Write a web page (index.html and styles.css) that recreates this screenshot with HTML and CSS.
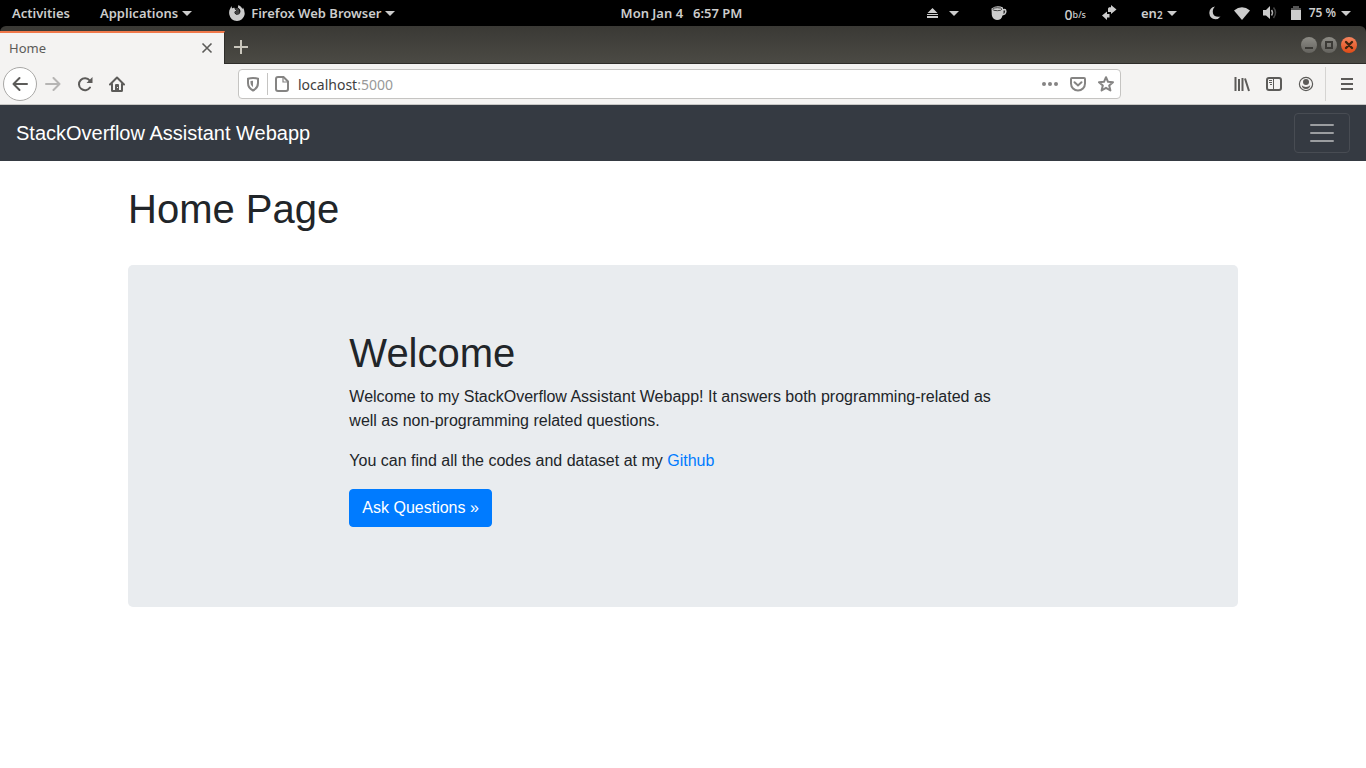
FILE: index.html
```
<!DOCTYPE html>
<html lang="en">
<head>
<meta charset="utf-8">
<meta name="viewport" content="width=device-width, initial-scale=1">
<title>Home</title>
<link rel="stylesheet" href="styles.css">
</head>
<body>
<header class="topbar">
  <div class="topbar-left">
    <button class="top-item">Activities</button>
    <button class="top-item">Applications <span class="caret"></span></button>
    <button class="top-item">
      <svg class="firefox" width="16" height="16" viewBox="0 0 16 16"><path fill="#ccc" d="M2.500 1 3 3.500Q4 2.500 5.500 2.800L6 4.500 7.500 5.500 5.600 6.800Q5 9 7.500 9.800Q10.500 10 11.200 7.500Q11.800 5.500 10.500 4L8.800 2.500 9.500 0Q12.500 1.500 13.500 4L14 2.500Q16.300 6.500 15.500 10Q14 15.500 8 16Q1.500 15.500.300 9.500Q-.3 6 1 4Z"/><path d="M5.500 3.500 8.500 3Q11 5 10.700 7.500L9.500 9 7 9 5.700 7.500 7.500 5.500Z" fill="#444"/></svg>
      Firefox Web Browser <span class="caret"></span>
    </button>
  </div>
  <time class="clock"><span>Mon Jan 4</span><span>6:57 PM</span></time>
  <div class="topbar-right">
    <button class="top-item status" aria-label="Removable drives">
      <svg width="11" height="10" viewBox="0 0 11 10"><path fill="#ccc" d="M5.500 0 10.500 5H.5ZM0 6h11v1H0zM0 8h11v2H0z"/></svg>
      <span class="caret drive-caret"></span>
    </button>
    <button class="top-item status" aria-label="Caffeine">
      <svg width="16" height="14" viewBox="0 0 16 14"><path fill="#ccc" d="M.5 2.500Q6-1.500 12 1.500V3Q16 2 15.500 6Q15 9 11.500 9.500Q10.500 14 6 14Q1.500 13.500.800 9Z"/><path d="M12.500 4.500v3.500Q14.200 7 14.200 4.500Z" fill="#222"/><ellipse cx="6.300" cy="3.200" rx="4.600" ry="1.500" fill="none" stroke="#444"/></svg>
    </button>
    <span class="network"><span class="rate">0</span><small>b/s</small></span>
    <svg class="transfer" width="15" height="16" viewBox="0 0 15 16"><path fill="#ccc" d="M7 2.300h2V0l5.500 4.600L9 9V7H6V3.500ZM7.500 9H5V6.500L0 10.500 5 15v-2.500h2.500Z"/></svg>
    <button class="top-item status">en<span class="subdigit">2</span> <span class="caret"></span></button>
    <button class="top-item status system" aria-label="System menu">
      <svg width="12" height="14" viewBox="0 0 12 14"><path fill="#ccc" d="M6 .5Q.5 1.500.300 7Q.8 13 6.500 13.300Q9.500 13.200 11.500 10.500Q5.500 11.500 4 7.500Q3 3.500 6 .5Z"/></svg>
      <svg width="16" height="13" viewBox="0 0 16 13"><path fill="#ccc" d="M0 3.500Q8-3 16 3.500L8 13Z"/></svg>
      <svg width="15" height="14" viewBox="0 0 15 14"><path fill="#ccc" d="M0 4h3l4-4v13L3 9.500H0z"/><path d="M8.500 4q2 2.800 0 5.500" fill="none" stroke="#aaa" stroke-width="1.500"/><path d="M10.500 1.500q4 5 0 10.500" fill="none" stroke="#444" stroke-width="1.500"/></svg>
      <svg width="10" height="14" viewBox="0 0 10 14"><path fill="#555" d="M2 0h6v2h2v2H0V2h2z"/><path fill="#ccc" d="M0 4h10v10H0z"/></svg>
      <span class="percent">75 %</span>
      <span class="caret"></span>
    </button>
  </div>
</header>

<section class="browser">
  <div class="tabstrip">
    <div class="tab">
      <span>Home</span>
      <button class="icon-button" aria-label="Close tab"><svg width="12" height="12" viewBox="0 0 12 12"><path d="M1.500 1.500l9 9m0-9l-9 9" stroke="#5c5b59" stroke-width="1.600"/></svg></button>
    </div>
    <button class="icon-button new-tab" aria-label="New tab"><svg width="14" height="14" viewBox="0 0 14 14"><path d="M7 0v14M0 7h14" stroke="#c9c6bc" stroke-width="2"/></svg></button>
    <div class="window-controls">
      <button class="window-button" aria-label="Minimize"><svg width="16" height="16" viewBox="0 0 16 16"><path d="M4 11h8" stroke="#3b3a36" stroke-width="2"/></svg></button>
      <button class="window-button" aria-label="Maximize"><svg width="16" height="16" viewBox="0 0 16 16"><path d="M5 5h6v6H5z" fill="none" stroke="#3b3a36" stroke-width="2"/></svg></button>
      <button class="window-button window-close" aria-label="Close"><svg width="16" height="16" viewBox="0 0 16 16"><path d="M5 5l6 6m0-6l-6 6" stroke="#40250f" stroke-width="2.400" stroke-linecap="round"/></svg></button>
    </div>
  </div>

  <div class="toolbar">
    <button class="icon-button back" aria-label="Back"><svg width="16" height="16" viewBox="0 0 16 16"><path d="M15 8H1.500M7.500 2 1.500 8l6 6" class="line" stroke-linecap="round" stroke-linejoin="round"/></svg></button>
    <button class="icon-button tool" aria-label="Forward"><svg class="faded" width="16" height="16" viewBox="0 0 16 16"><path d="M1 8h13.500M8.500 2l6 6-6 6" class="line" stroke-linecap="round" stroke-linejoin="round"/></svg></button>
    <button class="icon-button tool" aria-label="Reload"><svg width="16" height="16" viewBox="0 0 16 16"><path d="M12.700 4.500A6 6 0 1 0 13 11.500" class="line" stroke-linecap="round"/><path d="M15.500 1V7H9.500Z" class="solid"/></svg></button>
    <button class="icon-button tool" aria-label="Home"><svg width="16" height="16" viewBox="0 0 16 16"><path d="M1 8.500 8 1.500l7 7M3 8v6.500q0 .5.500.5h9q.5 0 .5-.5V8" class="line" stroke-linecap="round" stroke-linejoin="round"/><path d="M6 15V9q0-1 1-1h2q1 0 1 1v6Z" class="solid"/><path d="M8 11h1v1H8z" fill="#eee"/></svg></button>
    <div class="spacer"></div>
    <div class="urlbar">
      <button class="icon-button url-icon" aria-label="Tracking protection"><svg class="light" width="16" height="16" viewBox="0 0 16 16"><path d="M8 2q2.500 0 5 .8V7q0 5-5 7.500Q3 12 3 7V2.800Q5.500 2 8 2Z" class="line"/><path d="M8 4.800v6.500Q5.500 9.500 5.500 7V5q1-.2 2.500-.2" class="solid"/></svg></button>
      <button class="icon-button url-icon page-info" aria-label="Site information"><svg class="light" width="16" height="16" viewBox="0 0 16 16"><path d="M4 1h5.500L14 5.500V13q0 2-2 2H4q-2 0-2-2V3q0-2 2-2Z" class="line"/><path d="M9 1v5h5" fill="none" stroke="#858483" stroke-width="1.200"/></svg></button>
      <a class="address" href="#">localhost<span>:5000</span></a>
      <div class="url-actions">
        <button class="icon-button url-action" aria-label="Page actions"><svg class="light" width="16" height="16" viewBox="0 0 16 16"><circle cx="2" cy="8" r="2" class="solid"/><circle cx="8" cy="8" r="2" class="solid"/><circle cx="14" cy="8" r="2" class="solid"/></svg></button>
        <button class="icon-button url-action" aria-label="Save to Pocket"><svg class="light" width="16" height="16" viewBox="0 0 16 16"><path d="M2 2h12q1 0 1 1v4.500a7 7 0 0 1-14 0V3q0-1 1-1Z" class="line"/><path d="M4.500 6.200 8 9.500l3.500-3.300" class="line" stroke-linecap="round"/></svg></button>
        <button class="icon-button url-action" aria-label="Bookmark"><svg class="light" width="16" height="16" viewBox="0 0 16 16"><path d="m8 1.200 2 4.600 5 .4-3.800 3.300 1.200 5L8 11.800l-4.400 2.700 1.200-5L1 6.200l5-.4Z" class="line" stroke-linejoin="round"/></svg></button>
      </div>
    </div>
    <div class="spacer"></div>
    <button class="icon-button tool" aria-label="Library"><svg width="16" height="16" viewBox="0 0 16 16"><path d="M1.500 1v14M5 3v12M8.500 2v13M11 2.500l4 12.500" class="line"/></svg></button>
    <button class="icon-button tool" aria-label="Sidebars"><svg width="16" height="16" viewBox="0 0 16 16"><rect x="1" y="2" width="14" height="12" rx="2" class="line"/><path d="M7.500 2v12M3 4.500h3M3 6.500h3M4 8.500h2" stroke="#5c5b59"/></svg></button>
    <button class="icon-button tool" aria-label="Account"><svg width="16" height="16" viewBox="0 0 16 16"><circle cx="8" cy="8" r="6.600" fill="none" stroke="#5c5b59" stroke-width="1.200"/><circle cx="8" cy="6" r="3" class="solid"/><path d="M3.800 9.300q1.500 1.700 4.200 1.700t4.200-1.700Q12 13 8 13T3.800 9.300Z" class="solid"/></svg></button>
    <button class="icon-button tool menu" aria-label="Menu"><svg width="12" height="12" viewBox="0 0 12 12"><path d="M0 1h12M0 6h12M0 11h12" class="line"/></svg></button>
  </div>
</section>

<nav class="navbar">
  <a class="brand" href="#">StackOverflow Assistant Webapp</a>
  <button class="toggler" aria-label="Toggle navigation"><svg width="30" height="30" viewBox="0 0 30 30"><path d="M4 7h22M4 15h22M4 23h22" stroke="#9b9da0" stroke-width="2" stroke-linecap="round"/></svg></button>
</nav>

<main class="container">
  <h1>Home Page</h1>
  <section class="jumbotron">
    <div class="welcome">
      <h1>Welcome</h1>
      <p>Welcome to my StackOverflow Assistant Webapp! It answers both programming-related as well as non-programming related questions.</p>
      <p>You can find all the codes and dataset at my <a href="#">Github</a></p>
      <p><a class="btn" href="#">Ask Questions »</a></p>
    </div>
  </section>
</main>
</body>
</html>
```
FILE: styles.css
```
*, *::before, *::after { box-sizing: border-box; }
body {
  margin: 0;
  background: #fff;
  color: #212529;
  font: 16px/24px "Liberation Sans", Arial, sans-serif;
}
button { margin: 0; padding: 0; border: 0; background: none; color: inherit; font: inherit; }
svg { display: block; flex: none; }
a { color: #007bff; text-decoration: none; }

/* Desktop bar */
.topbar {
  display: grid;
  grid-template-columns: 1fr auto 1fr;
  align-items: center;
  height: 26px;
  padding: 0 15px 0 12px;
  background: #000;
  color: #ccc;
  font: 600 13px/20px "Noto Sans", sans-serif;
  white-space: nowrap;
}
.topbar-left, .topbar-right, .top-item, .clock { display: flex; align-items: center; }
.topbar-left { gap: 30px; }
.top-item { gap: 4px; }
.topbar-left .top-item:last-child { margin-left: 7px; }
.firefox { margin-right: 2px; }
.clock { gap: 10px; }
.topbar-right { justify-content: flex-end; }
.caret { border: 5px solid transparent; border-top-color: #ccc; border-bottom: 0; }
.drive-caret { margin-left: 7px; }
.status { margin-right: 32px; }
.network { display: flex; align-items: center; padding-top: 3px; margin: 0 16px 0 26px; font-weight: 400; }
.rate { font-size: 14px; font-weight: 500; }
.network small { font-size: 9px; font-weight: 500; }
.transfer { margin-right: 24px; }
.subdigit { padding-top: 4px; margin-left: -4px; font-size: 10px; }
.system { gap: 13px; margin-right: 0; }
.percent { margin-left: -5px; font-size: 12px; }
.system .caret { margin-left: -8px; }

/* Browser window */
.browser { background: #000; font-family: "Noto Sans", sans-serif; }
.icon-button { display: flex; align-items: center; justify-content: center; flex: none; }
.tabstrip {
  display: flex;
  align-items: stretch;
  height: 38px;
  border-bottom: 1px solid #2e2d2a;
  border-radius: 6px 6px 0 0;
  background: linear-gradient(#3a3935, #4b4a44);
}
.tab {
  display: flex;
  align-items: center;
  justify-content: space-between;
  width: 225px;
  margin: 5px 0 -1px;
  padding: 0 11px 2px 9px;
  border-top: 2px solid #f0784a;
  border-right: 1px solid #2e2d2a;
  background: #f4f3f2;
  color: #5c5b59;
  font-size: 13px;
}
.new-tab { margin: 5px 0 0 9px; }
.window-controls { display: flex; align-items: center; gap: 4px; margin-left: auto; padding-right: 9px; }
.window-button { width: 16px; height: 16px; border-radius: 50%; background: linear-gradient(#8d8c86, #64635e); }
.window-close { background: linear-gradient(#f6855f, #df4b16); }

.toolbar {
  display: flex;
  align-items: center;
  height: 41px;
  padding: 0 3px;
  border-bottom: 1px solid #c8c7c5;
  background: #f4f3f2;
}
.line { fill: none; stroke: #5c5b59; stroke-width: 2px; }
.solid { fill: #5c5b59; }
.light .line { stroke: #858483; }
.light .solid { fill: #858483; }
.faded { opacity: 0.4; }
.back { width: 34px; height: 34px; border: 1px solid #a9a8a6; border-radius: 50%; background: #fff; }
.tool { width: 32px; height: 34px; }
.menu { width: 38px; margin-left: 3px; padding-left: 4px; border-left: 1px solid #d5d4d2; }
.spacer { flex: 0 1 105px; }
.urlbar {
  display: flex;
  align-items: center;
  flex: 1;
  height: 30px;
  padding: 0 6px;
  border: 1px solid #c5c4c2;
  border-radius: 4px;
  background: #fff;
}
.url-icon { width: 16px; height: 22px; }
.page-info { width: 29px; margin-left: 6px; border-left: 1px solid #c5c4c2; }
.address { margin-left: 2px; padding-top: 2px; color: #3e3e3d; font-size: 14px; }
.address span { color: #999; }
.url-actions { display: flex; gap: 12px; margin-left: auto; }

/* Site */
.navbar {
  display: flex;
  align-items: center;
  justify-content: space-between;
  padding: 8px 16px;
  background: #353a42;
}
.brand { color: #fff; font-size: 20px; line-height: 30px; }
.toggler { padding: 4px 12px; border: 1px solid #484c53; border-radius: 4px; }
.container { max-width: 1140px; margin: 0 auto; padding: 24px 15px; }
h1 { margin: 0 0 8px; font-size: 40px; line-height: 48px; font-weight: 400; }
p { margin: 0 0 16px; }
.jumbotron { margin-top: 32px; padding: 64px 32px; border-radius: 5px; background: #e9ecef; }
.container > h1 { margin-bottom: 0; }
.welcome { width: 66.666%; margin: 0 auto; padding: 0 15px; }
.btn {
  display: inline-block;
  padding: 6px 12px;
  border: 1px solid #007bff;
  border-radius: 4px;
  background: #007bff;
  color: #fff;
  vertical-align: middle;
}
```
